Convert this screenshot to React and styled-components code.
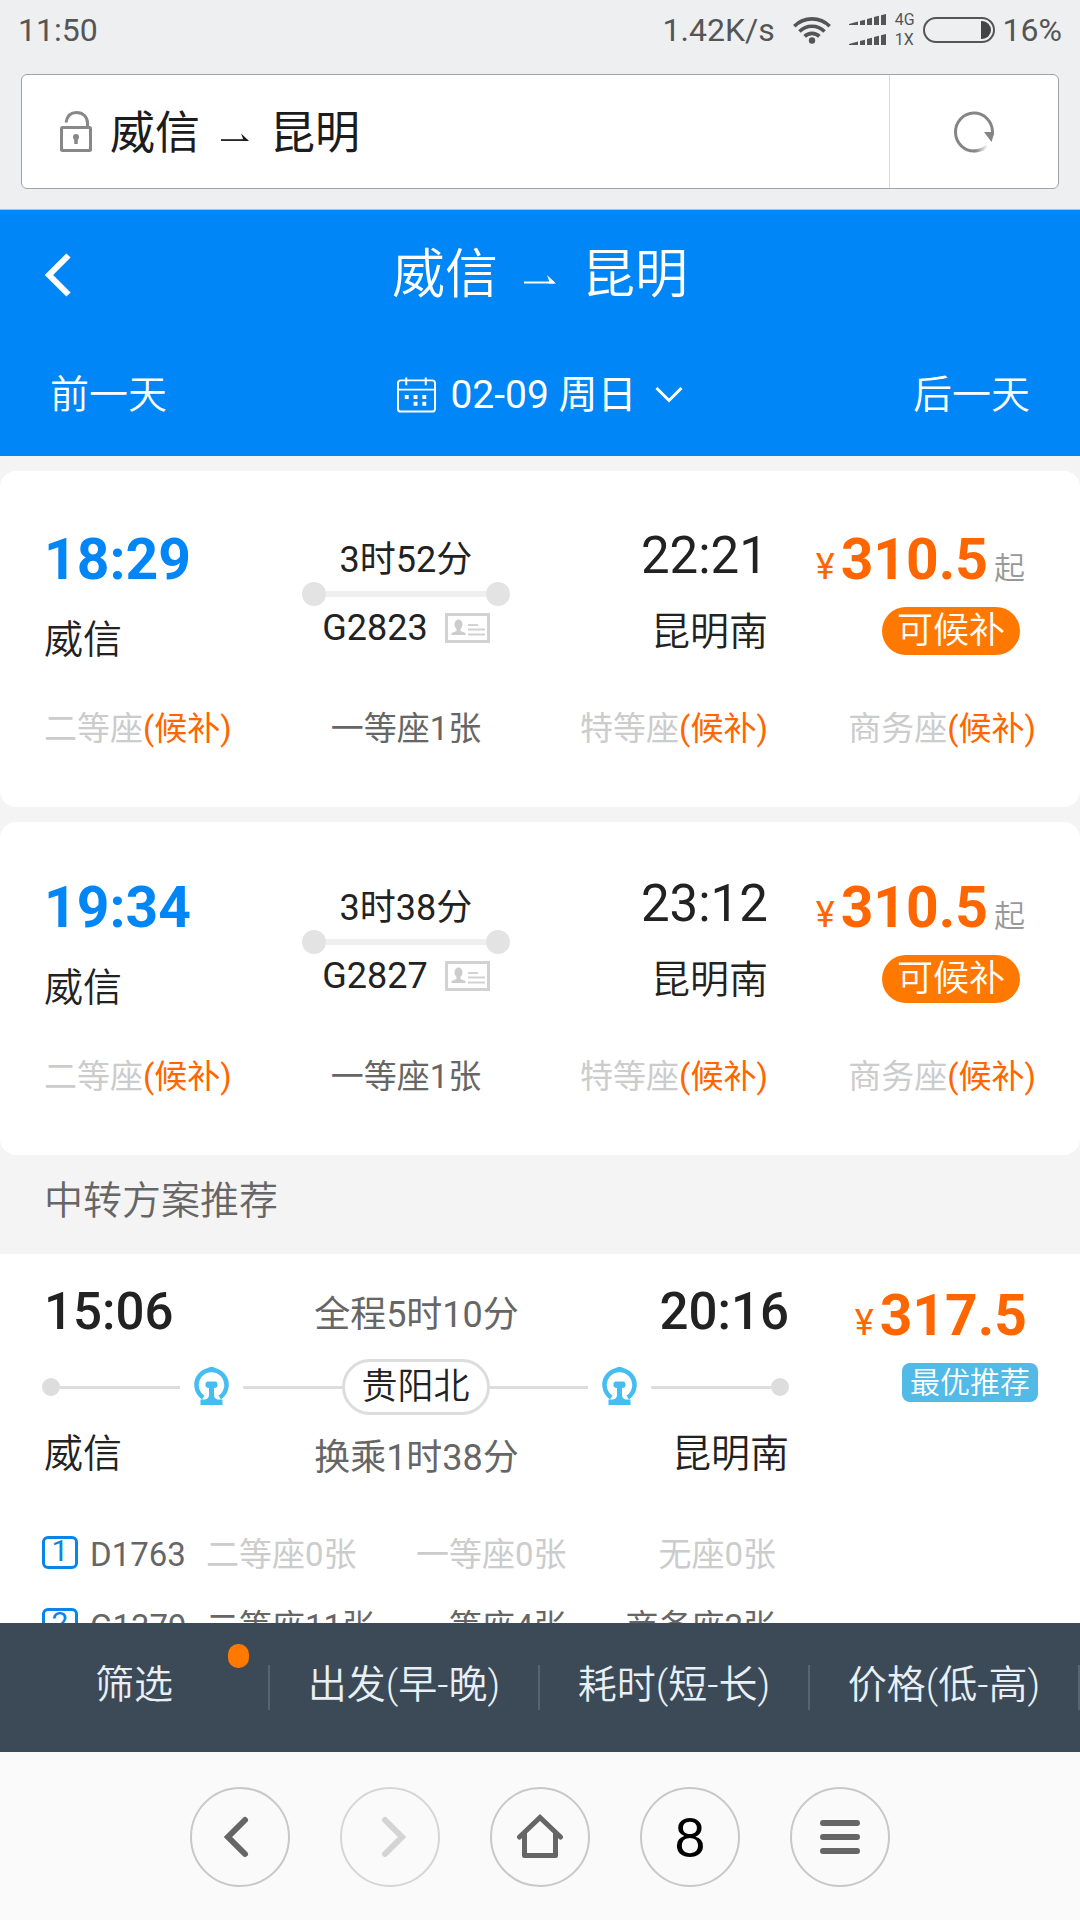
import React from "react";
import styled, { createGlobalStyle } from "styled-components";

const GlobalStyle = createGlobalStyle`
  *, *::before, *::after { box-sizing: border-box; }
  body {
    margin: 0;
    background: #f4f4f4;
    color: #222;
    font-family: Roboto, "Noto Sans CJK SC", sans-serif;
    -webkit-font-smoothing: antialiased;
  }
  button {
    margin: 0;
    padding: 0;
    border: 0;
    background: none;
    color: inherit;
    font: inherit;
    cursor: pointer;
  }
  svg { display: block; flex: none; }
`;

const Screen = styled.div`
  display: flex;
  flex-direction: column;
  height: 100vh;
  overflow: hidden;
`;

/* ---------- system and browser chrome ---------- */

const Chrome = styled.header`
  flex: none;
  background: #eeeff1;
  border-bottom: 1px solid #a9c3d3;
`;

const StatusBar = styled.div`
  display: flex;
  align-items: center;
  justify-content: space-between;
  height: 60px;
  padding: 0 18px;
  color: #555;
  font-size: 32px;
  line-height: 60px;
`;

const StatusGroup = styled.div`
  display: flex;
  align-items: center;
  gap: 18px;
`;

const Cellular = styled.div`
  display: flex;
  align-items: center;
  gap: 8px;
`;

const Networks = styled.div`
  display: flex;
  flex-direction: column;
  font-size: 16px;
  line-height: 20px;
`;

const AddressBar = styled.div`
  display: flex;
  height: 115px;
  margin: 14px 21px 20px;
  border: 1px solid #a0a2a4;
  border-radius: 6px;
  background: #fff;
`;

const Address = styled.button`
  display: flex;
  flex: 1;
  align-items: center;
  padding-left: 38px;
  font-size: 45px;
  line-height: 56px;
  color: #1c1c1c;
`;

const AddressTitle = styled.span`
  display: flex;
  align-items: center;
  gap: 21px;
  margin-left: 18px;
  padding-top: 4px;
`;

const Reload = styled.button`
  display: flex;
  align-items: center;
  justify-content: center;
  width: 169px;
  border-left: 1px solid #d8d8d8;
`;

/* ---------- page header ---------- */

const PageHeader = styled.section`
  flex: none;
  background: #0086f6;
  color: #fff;
`;

const TitleRow = styled.div`
  display: grid;
  grid-template-columns: 1fr auto 1fr;
  align-items: center;
  height: 130px;
  padding: 0 45px;
`;

const BackButton = styled.button`
  justify-self: start;
`;

const Title = styled.h1`
  display: flex;
  align-items: center;
  gap: 26px;
  margin: 0;
  font-size: 53px;
  font-weight: 350;
  line-height: 64px;
`;

const DateRow = styled.div`
  display: grid;
  grid-template-columns: 1fr auto 1fr;
  align-items: center;
  height: 116px;
  padding: 0 50px 6px;
  font-size: 39px;
  line-height: 48px;
`;

const DayButton = styled.button`
  justify-self: ${(p) => p.$side};
  font-weight: 350;
`;

const DateButton = styled.button`
  display: flex;
  align-items: center;
  gap: 14px;
`;

const ChevronSlot = styled.span`
  margin-left: 4px;
`;

/* ---------- direct trains ---------- */

const Results = styled.main`
  flex: 1;
  min-height: 0;
  overflow: hidden;
  padding-top: 15px;
`;

const TrainCard = styled.article`
  margin-bottom: ${(p) => (p.$last ? 0 : 15)}px;
  padding: ${(p) => (p.$last ? 54 : 57)}px 44px 54px;
  border-radius: 16px;
  background: #fff;
`;

const Columns = styled.div`
  display: grid;
  grid-template-columns: 9fr 9fr 9fr 10fr;
`;

const Stop = styled.div`
  display: flex;
  flex-direction: column;
  gap: 24px;
  align-items: ${(p) => (p.$end ? "flex-end" : "flex-start")};
`;

const Departure = styled.time`
  color: #0086f6;
  font-size: 57px;
  font-weight: 700;
  line-height: 64px;
`;

const Arrival = styled.time`
  font-size: 51px;
  font-weight: ${(p) => (p.$strong ? 500 : 400)};
  line-height: 56px;
`;

const Station = styled.span`
  font-size: 39px;
  font-weight: 350;
  line-height: 48px;
`;

const Journey = styled.div`
  display: flex;
  flex-direction: column;
  align-items: center;
  padding-top: 10px;
  font-size: 36px;
  line-height: 44px;
`;

const Track = styled.div`
  display: flex;
  align-items: center;
  width: 208px;
  &::before, &::after {
    content: "";
    width: 24px;
    height: 24px;
    border-radius: 50%;
    background: #e3e3e3;
  }
`;

const TrackLine = styled.span`
  flex: 1;
  height: 6px;
  background: #efefef;
`;

const TrainNumber = styled.div`
  display: flex;
  align-items: center;
  gap: 17px;
`;

const Fare = styled.div`
  display: flex;
  flex-direction: column;
  align-items: flex-end;
  gap: 15px;
`;

const Price = styled.div`
  display: flex;
  align-items: baseline;
  gap: 6px;
  height: 64px;
  padding-right: 11px;
  color: #ff6600;
  font-size: 36px;
  line-height: 64px;
  white-space: nowrap;
`;

const Amount = styled.strong`
  font-size: 57px;
  font-weight: 700;
`;

const From = styled.span`
  color: #999;
  font-size: 31px;
  font-weight: 350;
`;

const WaitlistBadge = styled.span`
  margin-right: 16px;
  padding: 0 15px;
  border-radius: 24px;
  background: #ff7800;
  color: #fff;
  font-size: 36px;
  font-weight: 350;
  line-height: 48px;
`;

const Seats = styled(Columns)`
  margin-top: 41px;
  font-size: 33px;
  line-height: 48px;
  white-space: nowrap;
`;

const Seat = styled.span`
  justify-self: ${(p) => p.$align || "start"};
  color: ${(p) => (p.$available ? "#666" : "#ccc")};
`;

const Waitlist = styled.span`
  color: #ff6600;
`;

/* ---------- transfer plans ---------- */

const SectionTitle = styled.h2`
  margin: 0;
  padding: 16px 44px 23px;
  color: #666;
  font-size: 39px;
  font-weight: 350;
  line-height: 60px;
`;

const TransferCard = styled.article`
  padding: 30px 42px 40px;
  background: #fff;
`;

const TransferTop = styled.div`
  display: flex;
`;

const Route = styled.div`
  flex: 3;
`;

const RouteRow = styled.div`
  display: grid;
  grid-template-columns: 1fr auto 1fr;
  align-items: end;
  padding-left: 2px;
  > :last-child { justify-self: end; }
`;

const RouteNote = styled.span`
  color: #666;
  font-size: 36px;
  line-height: ${(p) => (p.$tall ? 50 : 40)}px;
`;

const RouteLine = styled.div`
  display: flex;
  align-items: center;
  margin: 19px 0 15px;
  &::before, &::after {
    content: "";
    width: 18px;
    height: 18px;
    border-radius: 50%;
    background: #ddd;
  }
`;

const Segment = styled.span`
  flex: ${(p) => (p.$outer ? 11 : 9)};
  height: 3px;
  background: #ddd;
`;

const RailMark = styled.svg`
  margin: 0 14px 3px;
`;

const Via = styled.span`
  padding: 0 17px;
  border: 3px solid #ddd;
  border-radius: 29px;
  font-size: 36px;
  font-weight: 350;
  line-height: 50px;
`;

const TransferFare = styled(Fare)`
  flex: 1;
`;

const BestTag = styled.span`
  padding: 0 8px;
  border-radius: 8px;
  background: #52bae6;
  color: #fff;
  font-size: 30px;
  font-weight: 350;
  line-height: 39px;
`;

const Legs = styled.ol`
  display: flex;
  flex-direction: column;
  gap: 24px;
  margin: 53px 0 0;
  padding: 0;
  list-style: none;
`;

const Leg = styled.li`
  display: grid;
  grid-template-columns: 36px 104px 198px 198px 150px;
  column-gap: 12px;
  align-items: center;
  font-size: 33px;
  line-height: 48px;
  white-space: nowrap;
`;

const LegIndex = styled.span`
  height: 33px;
  margin-bottom: 6px;
  border: 3px solid #0b84ea;
  border-radius: 6px;
  color: #0b84ea;
  font-size: 30px;
  line-height: 24px;
  text-align: center;
`;

const LegTrain = styled.span`
  color: #666;
`;

/* ---------- sort bar and browser toolbar ---------- */

const SortBar = styled.nav`
  display: grid;
  grid-template-columns: repeat(4, 1fr);
  align-items: center;
  flex: none;
  height: 129px;
  background: #3c4a57;
  color: #e9f0f5;
`;

const SortButton = styled.button`
  position: relative;
  height: 45px;
  border-right: 2px solid #566370;
  font-size: 39px;
  font-weight: 350;
  line-height: 40px;
`;

const SortLabel = styled.span`
  display: block;
  height: 45px;
`;

const Dot = styled.span`
  position: absolute;
  top: -21px;
  right: 19px;
  width: 21px;
  height: 24px;
  border-radius: 10px;
  background: #ff7800;
`;

const Toolbar = styled.nav`
  display: flex;
  align-items: flex-start;
  justify-content: center;
  gap: 50px;
  flex: none;
  height: 168px;
  padding-top: 35px;
  background: #fafafa;
`;

const RoundButton = styled.button`
  display: flex;
  align-items: center;
  justify-content: center;
  width: 100px;
  height: 100px;
  border: 2px solid ${(p) => (p.disabled ? "#d6d6d6" : "#c8c8c8")};
  border-radius: 50%;
  color: ${(p) => (p.disabled ? "#d4d4d4" : "#666")};
`;

const TabCount = styled.span`
  color: #000;
  font-family: Lato, sans-serif;
  font-size: 54px;
  line-height: 60px;
`;

/* ---------- drawings ---------- */

const ToArrow = ({ width, height }) => (
  <svg width={width} height={height} viewBox="0 0 32 24" fill="none" aria-hidden="true">
    <path d="M0 19.5h30" stroke="currentColor" strokeWidth="2" />
    <path d="M23 12l9 8.5h-7.500l1-1.500z" fill="currentColor" />
  </svg>
);

const WifiIcon = () => (
  <svg width="38" height="28" viewBox="0 0 38 28" fill="none" stroke="#555" strokeWidth="3.600" aria-hidden="true">
    <path d="M1.300 10.200a25 25 0 0 1 35.400 0" />
    <path d="M6.500 15.400a17.600 17.600 0 0 1 25 0" />
    <path d="M11.600 20.400a10.500 10.500 0 0 1 14.800 0" />
    <circle cx="19" cy="24.500" r="3.200" fill="#555" stroke="none" />
  </svg>
);

const SignalIcon = () => (
  <svg width="38" height="32" viewBox="0 0 38 32" fill="#555" aria-hidden="true">
    {[0, 20].map((y) => (
      <g key={y} transform={`translate(0 ${y})`}>
        <path d="M0 10l9-2.500V11H0z" />
        <path d="M11 7l5-1.200V11h-5z" />
        <path d="M18 5l5-1.200V11h-5z" />
        <path d="M25 3l5-1.200V11h-5z" />
        <path d="M32 1.200L37 0V11h-5z" />
      </g>
    ))}
  </svg>
);

const BatteryIcon = () => (
  <svg width="72" height="26" viewBox="0 0 72 26" fill="none" aria-hidden="true">
    <rect x="1" y="1" width="70" height="24" rx="12" stroke="#555" strokeWidth="2" />
    <path d="M58 4h1a9 9 0 0 1 0 18h-1z" fill="#444" />
  </svg>
);

const LockIcon = () => (
  <svg width="32" height="41" viewBox="0 0 32 41" fill="none" stroke="#888" aria-hidden="true">
    <rect x="1.500" y="16.500" width="29" height="23" rx="1" strokeWidth="3" />
    <path d="M6 11.500C7 5 11 1.500 16.500 1.500C23 1.500 27.500 6 27.500 12V16" strokeWidth="3" />
    <circle cx="16" cy="26" r="3" fill="#888" stroke="none" />
    <path d="M16 26v7" strokeWidth="3.500" />
  </svg>
);

const ReloadIcon = () => (
  <svg width="42" height="42" viewBox="0 0 42 42" fill="none" aria-hidden="true">
    <defs>
      <linearGradient id="fade" gradientUnits="userSpaceOnUse" x1="22" y1="38" x2="35" y2="36">
        <stop offset="0" stopColor="#858585" />
        <stop offset="1" stopColor="#858585" stopOpacity="0" />
      </linearGradient>
    </defs>
    <path d="M39.500 24V21A18.500 19 0 1 0 22 40" stroke="#858585" strokeWidth="3" />
    <path d="M21 40Q28 40 34 35" stroke="url(#fade)" strokeWidth="3" />
    <path d="M31 21H41V23L38.500 31z" fill="#858585" />
  </svg>
);

const BackIcon = () => (
  <svg width="26" height="44" viewBox="0 0 26 44" fill="none" aria-hidden="true">
    <path d="M23.500 2.500L4 22l19.500 19.500" stroke="currentColor" strokeWidth="6" />
  </svg>
);

const CalendarIcon = () => (
  <svg width="39" height="38" viewBox="0 0 40 38" fill="none" aria-hidden="true">
    <rect x="1" y="4" width="38" height="32" rx="3" stroke="currentColor" strokeWidth="2" />
    <path d="M1 13.500h38M9.500 1v8M29.500 1v8" stroke="currentColor" strokeWidth="2" />
    <path d="M8 19h4v4H8zM17 19h4v4h-4zM26 19h4v4h-4zM17 26h4v4h-4zM26 26h4v4h-4z" fill="currentColor" />
  </svg>
);

const DownIcon = () => (
  <svg width="28" height="18" viewBox="0 0 28 18" fill="none" aria-hidden="true">
    <path d="M1.500 2L14 14.500L26.500 2" stroke="currentColor" strokeWidth="3" />
  </svg>
);

const IdCardIcon = () => (
  <svg width="45" height="30" viewBox="0 0 45 30" fill="none" aria-hidden="true">
    <rect x="1.500" y="1.500" width="42" height="27" stroke="#d2d2d2" strokeWidth="3" />
    <ellipse cx="13.500" cy="11.500" rx="4" ry="5" fill="#ccc" />
    <path d="M11.500 15h4v3l5 2v2h-14v-2l5-2z" fill="#ccc" />
    <path d="M23 12h10M23 16.500h17M23 21.500h17" stroke="#d2d2d2" strokeWidth="2" />
  </svg>
);

const RailIcon = () => (
  <RailMark width="35" height="38" viewBox="0 0 35 38" fill="none" aria-hidden="true">
    <path d="M9.300 30.500A15 15 0 1 1 25.700 30.500" stroke="#45bdf0" strokeWidth="4.500" />
    <path d="M14 1.500C14 .5 15.500 0 17.500 0S21 .5 21 1.500V5h-7z" fill="#45bdf0" />
    <path d="M11.500 17q0-2.500 2.500-2.500h7q2.500 0 2.500 2.500v2q0 1.500-3.500 2v7c0 2.500 1.500 4 4 4.500h4.500v5.500h-22V32.500H11c2.500-.5 4-2 4-4.500v-7q-3.500-.5-3.500-2z" fill="#45bdf0" />
  </RailMark>
);

const PrevIcon = () => (
  <svg width="40" height="44" viewBox="0 0 40 44" fill="none" aria-hidden="true">
    <path d="M25 5L8 22L25 39" stroke="currentColor" strokeWidth="6" strokeLinecap="round" />
  </svg>
);

const NextIcon = () => (
  <svg width="40" height="44" viewBox="0 0 40 44" fill="none" aria-hidden="true">
    <path d="M15 5L32 22L15 39" stroke="currentColor" strokeWidth="6" strokeLinecap="round" />
  </svg>
);

const HomeIcon = () => (
  <svg width="48" height="48" viewBox="0 0 48 48" fill="none" stroke="currentColor" strokeWidth="5" aria-hidden="true">
    <path d="M3.500 24L24 4.500L44.500 24" strokeLinecap="round" />
    <path d="M8.500 20V42.500H39.500V20" strokeLinejoin="round" />
  </svg>
);

const MenuIcon = () => (
  <svg width="40" height="36" viewBox="0 0 40 36" stroke="currentColor" strokeWidth="6" strokeLinecap="round" aria-hidden="true">
    <path d="M3 4h34M3 18h34M3 32h34" />
  </svg>
);

/* ---------- data ---------- */

const trains = [
  { number: "G2823", start: "18:29", end: "22:21", duration: "3时52分" },
  { number: "G2827", start: "19:34", end: "23:12", duration: "3时38分" },
];

const seats = [
  { name: "二等座", align: "start" },
  { name: "一等座", left: 1, align: "center" },
  { name: "特等座", align: "end" },
  { name: "商务座", align: "end" },
];

const legs = [
  { number: "D1763", seats: ["二等座0张", "一等座0张", "无座0张"], available: false },
  { number: "G1379", seats: ["二等座11张", "一等座4张", "商务座2张"], available: true },
];

const sorts = ["筛选", "出发(早-晚)", "耗时(短-长)", "价格(低-高)"];

export default function App() {
  return (
    <Screen>
      <GlobalStyle />
      <Chrome>
        <StatusBar>
          <span>11:50</span>
          <StatusGroup>
            <span>1.42K/s</span>
            <WifiIcon />
            <Cellular>
              <SignalIcon />
              <Networks>
                <span>4G</span>
                <span>1X</span>
              </Networks>
              <BatteryIcon />
              <span>16%</span>
            </Cellular>
          </StatusGroup>
        </StatusBar>
        <AddressBar>
          <Address type="button">
            <LockIcon />
            <AddressTitle>
              <span>威信</span>
              <ToArrow width={28} height={21} />
              <span>昆明</span>
            </AddressTitle>
          </Address>
          <Reload type="button" aria-label="刷新">
            <ReloadIcon />
          </Reload>
        </AddressBar>
      </Chrome>

      <PageHeader>
        <TitleRow>
          <BackButton type="button" aria-label="返回">
            <BackIcon />
          </BackButton>
          <Title>
            <span>威信</span>
            <ToArrow width={32} height={24} />
            <span>昆明</span>
          </Title>
        </TitleRow>
        <DateRow>
          <DayButton type="button" $side="start">前一天</DayButton>
          <DateButton type="button">
            <CalendarIcon />
            <span>02-09 周日</span>
            <ChevronSlot>
              <DownIcon />
            </ChevronSlot>
          </DateButton>
          <DayButton type="button" $side="end">后一天</DayButton>
        </DateRow>
      </PageHeader>

      <Results>
        {trains.map((train, i) => (
          <TrainCard key={train.number} $last={i === trains.length - 1}>
            <Columns>
              <Stop>
                <Departure>{train.start}</Departure>
                <Station>威信</Station>
              </Stop>
              <Journey>
                <span>{train.duration}</span>
                <Track>
                  <TrackLine />
                </Track>
                <TrainNumber>
                  <span>{train.number}</span>
                  <IdCardIcon />
                </TrainNumber>
              </Journey>
              <Stop $end>
                <Arrival>{train.end}</Arrival>
                <Station>昆明南</Station>
              </Stop>
              <Fare>
                <Price>
                  <span>¥</span>
                  <Amount>310.5</Amount>
                  <From>起</From>
                </Price>
                <WaitlistBadge>可候补</WaitlistBadge>
              </Fare>
            </Columns>
            <Seats>
              {seats.map((seat) => (
                <Seat key={seat.name} $align={seat.align} $available={Boolean(seat.left)}>
                  {seat.name}
                  {seat.left ? `${seat.left}张` : <Waitlist>(候补)</Waitlist>}
                </Seat>
              ))}
            </Seats>
          </TrainCard>
        ))}

        <SectionTitle>中转方案推荐</SectionTitle>

        <TransferCard>
          <TransferTop>
            <Route>
              <RouteRow>
                <Arrival $strong>15:06</Arrival>
                <RouteNote $tall>全程5时10分</RouteNote>
                <Arrival $strong>20:16</Arrival>
              </RouteRow>
              <RouteLine>
                <Segment $outer />
                <RailIcon />
                <Segment />
                <Via>贵阳北</Via>
                <Segment />
                <RailIcon />
                <Segment $outer />
              </RouteLine>
              <RouteRow>
                <Station>威信</Station>
                <RouteNote>换乘1时38分</RouteNote>
                <Station>昆明南</Station>
              </RouteRow>
            </Route>
            <TransferFare>
              <Price>
                <span>¥</span>
                <Amount>317.5</Amount>
              </Price>
              <BestTag>最优推荐</BestTag>
            </TransferFare>
          </TransferTop>
          <Legs>
            {legs.map((leg, i) => (
              <Leg key={leg.number}>
                <LegIndex>{i + 1}</LegIndex>
                <LegTrain>{leg.number}</LegTrain>
                {leg.seats.map((text, n) => (
                  <Seat key={text} $available={leg.available} $align={n === 2 ? "end" : "start"}>
                    {text}
                  </Seat>
                ))}
              </Leg>
            ))}
          </Legs>
        </TransferCard>
      </Results>

      <SortBar>
        {sorts.map((label, i) => (
          <SortButton key={label} type="button">
            <SortLabel>{label}</SortLabel>
            {i === 0 && <Dot />}
          </SortButton>
        ))}
      </SortBar>

      <Toolbar>
        <RoundButton type="button" aria-label="后退">
          <PrevIcon />
        </RoundButton>
        <RoundButton type="button" aria-label="前进" disabled>
          <NextIcon />
        </RoundButton>
        <RoundButton type="button" aria-label="主页">
          <HomeIcon />
        </RoundButton>
        <RoundButton type="button">
          <TabCount>8</TabCount>
        </RoundButton>
        <RoundButton type="button" aria-label="菜单">
          <MenuIcon />
        </RoundButton>
      </Toolbar>
    </Screen>
  );
}
